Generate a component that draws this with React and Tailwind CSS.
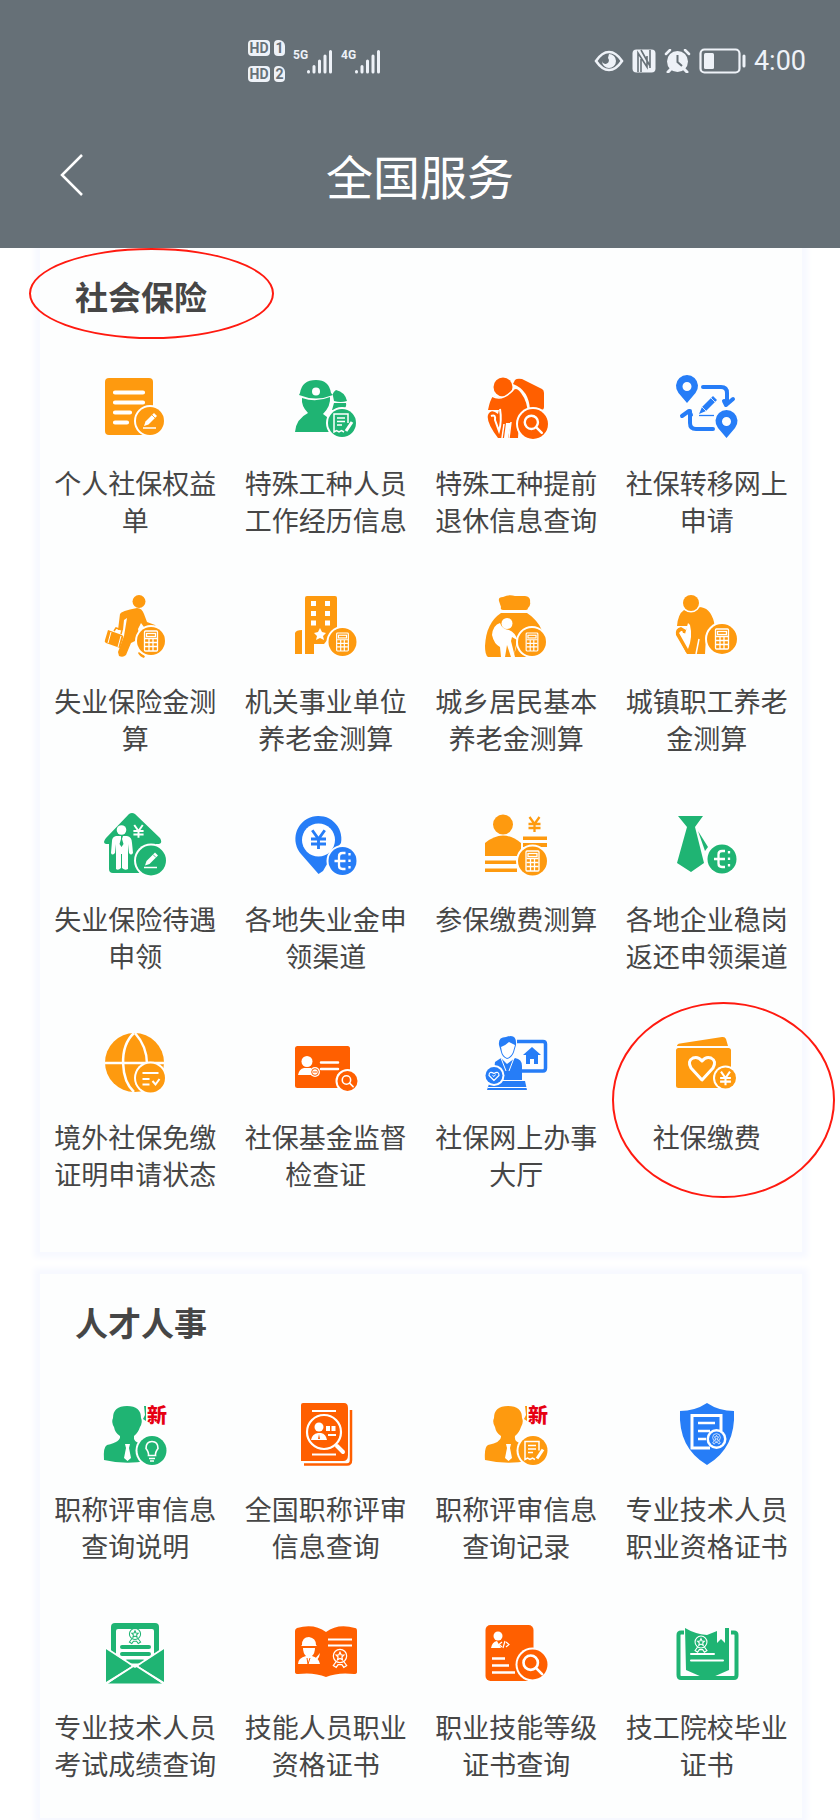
import React from 'react';

/* ---------- small parts shared by the service icons ---------- */

const Badge = ({ x, y, r = 14, children }) => (
  <g transform={`translate(${x} ${y})`}>
    <circle r={r + 2} fill="#fff" />
    <circle r={r} fill="currentColor" />
    {children}
  </g>
);

const Pencil = () => (
  <g>
    <path d="M-6 5 L-4.5 0.5 L4 -8 L7 -5 L-1.5 3.5 Z" fill="#fff" />
    <path d="M2 -6 L5 -3" stroke="currentColor" strokeWidth="0.8" />
    <path d="M-7 7 H6" stroke="#fff" strokeWidth="1.5" />
  </g>
);

const Calculator = () => (
  <g fill="none" stroke="#fff" strokeWidth="1.3">
    <rect x="-6.5" y="-10" width="13" height="20" rx="1" />
    <rect x="-4.5" y="-7.5" width="9" height="3" />
    <path d="M-6 -2.5 H6 M-6 1.5 H6 M-6 5.5 H6 M-2 -2.5 V10 M2 -2.5 V10" />
  </g>
);

const Receipt = () => (
  <g fill="none" stroke="#fff" strokeWidth="1.5">
    <path d="M6 0 V-9 H-8 V9 L-5.5 7.5 L-3 9 L-0.5 7.5 L2 9" />
    <path d="M-5 -5 H3 M-5 -1.5 H3 M-5 2 H0" />
    <path d="M4 8 L10 -1" strokeWidth="3" />
  </g>
);

const Search = ({ s = 1 }) => (
  <g fill="none" stroke="#fff" strokeWidth="2.2" transform={`scale(${s})`}>
    <circle cx="-1.5" cy="-1.5" r="6" />
    <path d="M3 3 L8 8" strokeLinecap="round" />
  </g>
);

const Yen = ({ x = 0, y = 0, s = 1, color = '#fff' }) => (
  <path
    d="M-5 -7 L0 0 L5 -7 M0 0 V8 M-6 0 H6 M-6 4 H6"
    transform={`translate(${x} ${y}) scale(${s})`}
    fill="none"
    stroke={color}
    strokeWidth="2.3"
  />
);

const Channel = () => (
  <g fill="none" stroke="#fff" strokeWidth="2.3">
    <path d="M3 -8 H0 Q-3.500 -8 -3.500 -4.500 V4.500 Q-3.500 8 0 8 H3 M-8 0 H3" />
    <path d="M7 -8 V-5.500 M7 -1.500 V1 M7 5 V7.500" />
  </g>
);

const Medal = ({ x, y, s = 1, color = '#fff' }) => (
  <g transform={`translate(${x} ${y}) scale(${s})`} fill="none" stroke={color} strokeWidth="1.3">
    <circle r="7" />
    <path d="M0 -4 L1.2 -1.200 L4 -1 L2 1 L2.6 4 L0 2.500 L-2.600 4 L-2 1 L-4 -1 L-1.200 -1.200 Z" />
    <path d="M-4 6 L-7 10 L-4 12 L-2 9 H2 L4 12 L7 10 L4 6" />
  </g>
);

/* ---------- service icons, 64 x 64 ---------- */

const icons = {
  statement: (
    <>
      <rect x="2" y="2" width="48" height="57" rx="4" fill="currentColor" />
      <path d="M12 16.500 H40 M12 26.500 H40 M12 36.500 H27 M12 46.500 H24" stroke="#fff" strokeWidth="4.200" strokeLinecap="round" />
      <Badge x={47} y={45}><Pencil /></Badge>
    </>
  ),
  workers: (
    <>
      <g fill="currentColor">
        <path d="M6 17 Q8 4 22 4 Q35 4 37 17 L39 19 Q22 26 5 19 Z" />
        <path d="M8 22 Q22 27 36 21 Q37 30 29 38 Q38 43 39 56 H1 Q2 43 14 37 Q7 30 8 22 Z" />
        <path d="M39 20 Q38 17 42 14 Q51 16 53 25 Q47 27 40 25 Z" />
        <path d="M40 27 H52 Q53 31 49 34 H38 Z" />
      </g>
      <circle cx="22" cy="15.500" r="4" fill="#fff" />
      <Badge x={48} y={47}><Receipt /></Badge>
    </>
  ),
  retire: (
    <>
      <g fill="currentColor">
        <path d="M31 4 Q33 2 38 3 L58 13 Q60 14 60 17 V31 Q60 34 57 34 H46 Q45 14 29 8 Z" />
        <circle cx="19" cy="11" r="9.500" />
        <path d="M9 20 Q18 25 29 15 Q32 10 37 17 Q44 26 44 40 L35 45 L34 62 H24 L27 47 H22 L20 62 H14 Q2 46 4 39 Q7 32 14 38 L15 34 H4 Q6 24 9 20 Z" />
      </g>
      <path d="M8 20 Q18 26 29 14" stroke="#fff" strokeWidth="1.500" fill="none" />
      <path d="M7 40 Q12 38 11 44 L15 55 Q18 45 16 33" stroke="#fff" strokeWidth="2" fill="none" />
      <path d="M27 46 L25 62 M20 48 L18 62" stroke="#fff" strokeWidth="1.500" />
      <Badge x={49} y={48} r={15}><Search s={1.100} /></Badge>
    </>
  ),
  transfer: (
    <>
      <g fill="currentColor">
        <path fillRule="evenodd" d="M12 27 L3.500 17 A11 11 0 1 1 20.500 17 Z M12 6 A4.500 4.500 0 1 0 12 15 A4.500 4.500 0 1 0 12 6 Z" />
        <path fillRule="evenodd" d="M51.500 62 L43 52 A11 11 0 1 1 60 52 Z M51.500 41 A4.500 4.500 0 1 0 51.500 50 A4.500 4.500 0 1 0 51.500 41 Z" />
        <path d="M24 38 L27 31 L36 22 L38 20 L42 24 L31 35 Z" />
      </g>
      <path d="M36 22 L40 26 M27 31 L31 35" stroke="#fff" strokeWidth="0.800" />
      <path d="M24 39.500 H39" stroke="currentColor" strokeWidth="1.300" />
      <g fill="none" stroke="currentColor" strokeWidth="4" strokeLinecap="round" strokeLinejoin="round">
        <path d="M28 11 H46 Q52 11 52 17 V28 M49 25 L51 29 L58 23" />
        <path d="M38 53 H21 Q15 53 15 47 V35 M7 40 L14 35 L16 39" />
      </g>
    </>
  ),
  jobless: (
    <>
      <g fill="currentColor">
        <circle cx="36" cy="7.500" r="6.500" />
        <path d="M34 14 Q39 14 41 20 L44 28 L52 31 Q54 34 51 35 L41 33 L38 29 L35 35 Q37 42 34 46 L28 49 L23 61 Q20 64 16 62 L15 58 L21 42 L24 24 L21 26 L20 36 H15 L17 20 Q18 17 34 14 Z" />
        <path d="M5 36 L19 41 Q21 42 20 44 L17 54 L3 49 Q1 48 2 46 Z" />
        <path d="M36 58 L42 62 L41 64 Q37 63 35 59 Z" />
      </g>
      <path d="M11 37 L13 34 L19 36 L18 40" fill="none" stroke="currentColor" strokeWidth="1.500" />
      <path d="M8 38 L5 49 M18 42 L15 53" stroke="#fff" strokeWidth="1" />
      <Badge x={48} y={47}><Calculator /></Badge>
    </>
  ),
  building: (
    <>
      <path d="M13 2 H41 Q43 2 43 4 V34 L30 50 H20 V60 H11 V4 Q11 2 13 2 Z" fill="currentColor" />
      <path d="M1 39 Q2 36 8 36 V60 H1 Z" fill="currentColor" />
      <path d="M17 7 h5 v5 h-5 Z M31 7 h5 v5 h-5 Z M17 17 h5 v5 h-5 Z M31 17 h5 v5 h-5 Z M17 26.500 h5 v5 h-5 Z M31 26.500 h5 v5 h-5 Z" fill="#fff" />
      <path d="M26 34 L28 38 L32 39 L29 42 L30 46 L26 44 L22 46 L23 42 L20 39 L24 38 Z" fill="#fff" />
      <Badge x={48.500} y={48}><g transform="scale(0.900)"><Calculator /></g></Badge>
    </>
  ),
  moneybag: (
    <>
      <path d="M15 7 Q14 3 19 3 Q25 0 31 2 Q38 2 41 2 Q47 3 46 8 Q47 11 44 14 Q44 16 42 16 H19 Q16 16 17 13 Z" fill="currentColor" />
      <path d="M17 19 H43 Q58 29 60 45 L53 63 H4 Q1 61 1 52 Q2 29 17 19 Z" fill="currentColor" />
      <g fill="#fff">
        <circle cx="23" cy="29.500" r="5.500" />
        <path d="M16 29 Q9 31 8 41 Q10 50 16 53 L17 63 H21 L23 51 L27 63 H31 L27 47 L28 43 L33 46 L30 61 L34 47 Q31 38 25 36 Q18 35 16 29 Z" />
      </g>
      <Badge x={48} y={48}><g transform="scale(0.900)"><Calculator /></g></Badge>
    </>
  ),
  elder: (
    <>
      <path d="M22 13 Q35 12 39 28 L40 36 L31 42 L30 60 H12 L1 41 Q0 34 6 33 L11 36 L13 32 H2 Q3 20 9 16 Q18 21 22 13 Z" fill="currentColor" />
      <circle cx="16" cy="9" r="9.500" fill="#fff" />
      <circle cx="16" cy="9" r="8" fill="currentColor" />
      <path d="M4 39 Q8 34 10 40 L13 29 L15 31 Q18 43 13 55 Z" fill="#fff" />
      <path d="M3 41 Q1 35 6 35 Q9 36 9 39 M3 40 L12 58" stroke="currentColor" strokeWidth="2" fill="none" />
      <path d="M24 45 L21 60" stroke="#fff" strokeWidth="1.500" />
      <Badge x={47} y={45} r={15}><Calculator /></Badge>
    </>
  ),
  housePerson: (
    <>
      <path d="M26 2 Q29 0 32 2 L57 26 Q60 31 56 32 H53 V61 H10 Q6 61 6 57 V32 H3 Q-1 31 3 26 Z" fill="currentColor" />
      <g fill="#fff">
        <circle cx="18.500" cy="18" r="4.800" />
        <path d="M13 24 H24 Q29 25 29 31 L30 41 Q28 44 26 41 L25 32 V57 Q22 59 19 56 V42 H18 V56 Q15 59 13 57 V32 L12 41 Q9 44 8 41 L9 29 Q9 25 13 24 Z" />
      </g>
      <path d="M18 24 h2 l-1 3 l1.500 5 l-2 3 l-2 -3 l1.500 -5 Z" fill="currentColor" />
      <Yen x={35.500} y={19} s={0.850} />
      <Badge x={48} y={48.500} r={15}><Pencil /></Badge>
    </>
  ),
  pinYen: (
    <>
      <path d="M24.500 62 L7 42 A23 23 0 1 1 47 31 L40 40 L29 59 Z" fill="currentColor" />
      <circle cx="24.500" cy="28" r="16.500" fill="#fff" />
      <Yen x={24.500} y={27} s={1.250} color="currentColor" />
      <Badge x={48.500} y={49}><Channel /></Badge>
    </>
  ),
  payCalc: (
    <>
      <g fill="currentColor">
        <circle cx="19" cy="12.500" r="10" />
        <path d="M1 31 Q19 16 37 31 V44 H1 Z" />
        <path d="M1 48.500 H33 V52 H1 Z M1 56.500 H33 V60 H1 Z M39 24.500 H63 V28 H39 Z M39 31 H63 V35 H39 Z" />
      </g>
      <Yen x={50.500} y={12} color="currentColor" />
      <Badge x={48.500} y={49} r={14.500}><Calculator /></Badge>
    </>
  ),
  tie: (
    <>
      <g fill="currentColor">
        <path d="M3 4 H28 L20 15 L29 51 L16 60 L2 51 L12 15 Z" />
        <path d="M23 19 L33 35 L30 39 Z" />
      </g>
      <Badge x={47} y={47} r={14.500}><Channel /></Badge>
    </>
  ),
  globe: (
    <>
      <circle cx="31.500" cy="32.500" r="29.500" fill="currentColor" />
      <path d="M2 33 H61 M31 3 C15 18 18 50 31 62 M32 3 C40 12 44 22 44 34" stroke="#fff" strokeWidth="2.500" fill="none" />
      <Badge x={47.500} y={48} r={14.500}>
        <path d="M-8 -5 H8 M-8 1 H-1 M-8 6.500 H-1" stroke="#fff" strokeWidth="2.200" />
        <path d="M2 3 L5 6.500 L9 1" stroke="#fff" strokeWidth="2" fill="none" />
      </Badge>
    </>
  ),
  idCard: (
    <>
      <rect x="1" y="16" width="55" height="42" rx="2.500" fill="currentColor" />
      <circle cx="13" cy="31.500" r="5.500" fill="#fff" />
      <path d="M4 45 Q5 39 10 38 H17 L20 45 Z" fill="#fff" />
      <circle cx="21" cy="42" r="5" fill="#fff" />
      <circle cx="21" cy="42" r="3.300" fill="none" stroke="currentColor" />
      <path d="M19 42 H23" stroke="currentColor" />
      <path d="M27 32.500 H44 M27 39 H44" stroke="#fff" strokeWidth="2.500" strokeLinecap="round" />
      <Badge x={53.500} y={51} r={10}><Search s={0.700} /></Badge>
    </>
  ),
  hall: (
    <>
      <path d="M33 11.500 H59 Q61.500 11.500 61.500 14 V38 Q61.500 41 59 41 H37" fill="none" stroke="currentColor" strokeWidth="3.500" />
      <path d="M48 17 L57 25 H54 V34 H50 V29 H46 V34 H42 V25 H39 Z" fill="currentColor" />
      <path d="M15 15 Q14 7 22 7 Q33 3 32 15 L30 22 Q28 28 23 29 Q18 27 17 22 Z" fill="currentColor" />
      <path d="M17 17 Q22 15 25 12 L31 15 L29 22 Q27 27 23 28 Q19 26 18 22 Z" fill="#fff" />
      <path d="M17 28 L23 34 L31 28 Q38 29 38 36 V50 H9 L11 32 Z" fill="currentColor" />
      <path d="M17 28 L22 41 M30 28 L25 41" stroke="#fff" strokeWidth="1" />
      <path d="M6 51 H41 L43 60 H3 Z" fill="currentColor" />
      <path d="M4 57.500 H43" stroke="#fff" strokeWidth="1" />
      <Badge x={10} y={45.500} r={8.500}>
        <path d="M0 5 L-5 0 Q-5 -5 0 -2 Q5 -5 5 0 Z" fill="none" stroke="#fff" strokeWidth="1.200" />
        <path d="M-1.500 0 L0 1 L1.500 -1" fill="none" stroke="#fff" strokeWidth="1" />
      </Badge>
    </>
  ),
  wallet: (
    <>
      <path d="M2 16 Q2 14 5 13.500 L47 7 Q50 6.500 51 9 L53 16 Z" fill="currentColor" />
      <rect x="1" y="18" width="55" height="40" rx="2.500" fill="currentColor" />
      <path d="M27 50 L16 38 Q12 31 18 28 Q23 26 27 31 Q31 26 36 28 Q42 31 38 38 Z" fill="none" stroke="#fff" strokeWidth="3" strokeLinejoin="round" />
      <Badge x={50.500} y={48} r={10.500}><Yen s={0.900} /></Badge>
    </>
  ),
  personHelp: (
    <>
      <Person />
      <Badge x={49} y={48.500} r={14.500}>
        <path d="M-3.500 5 Q-3 2 -6 -2 Q-6 -9 0 -9 Q6 -9 6 -2 Q3 2 3.500 5 Z M-3 8 H3 M-2 10.500 H2" fill="none" stroke="#fff" strokeWidth="1.600" />
      </Badge>
    </>
  ),
  bookSearch: (
    <>
      <path d="M10 62.500 H53 Q57 62.500 57 58 V8" fill="none" stroke="currentColor" strokeWidth="2.500" />
      <path d="M9 1 H50 Q54 1 54 6 V53 Q54 59 49 59 H7 V3 Q7 1 9 1 Z" fill="currentColor" />
      <path d="M18 9 H42 M18 52.500 H42" stroke="#fff" strokeWidth="2" />
      <circle cx="30" cy="30" r="17" fill="none" stroke="#fff" strokeWidth="2.200" />
      <path d="M43 44 L49 50" stroke="#fff" strokeWidth="4" strokeLinecap="round" />
      <circle cx="25" cy="25" r="4.500" fill="#fff" />
      <path d="M17 38 Q18 32 24 31 H27 Q32 32 33 38 Z" fill="#fff" />
      <path d="M25 32 L24 37 H26 Z" fill="currentColor" />
      <path d="M32 24 h4 v5 h-4 Z M37.500 24 h4 v5 h-4 Z M34 32 h8 v2 h-8 Z" fill="#fff" />
    </>
  ),
  personRecord: (
    <>
      <Person />
      <Badge x={49} y={48.500} r={14.500}><Receipt /></Badge>
    </>
  ),
  shield: (
    <>
      <path d="M32 1 Q44 9 59 9 Q61 46 32 63 Q3 46 5 9 Q20 9 32 1 Z" fill="currentColor" />
      <path d="M46 29 V13.500 H17 V46 H35" fill="none" stroke="#fff" strokeWidth="3" />
      <path d="M23 21 H40 M23 29 H35 M23 37 H31" stroke="#fff" strokeWidth="2.500" />
      <circle cx="41.500" cy="37" r="10" fill="#fff" />
      <circle cx="41.500" cy="37" r="7.500" fill="currentColor" />
      <Medal x={41.500} y={35.500} s={0.550} />
    </>
  ),
  envelope: (
    <>
      <path d="M8 34 V7 Q8 3 12 3 H52 Q56 3 56 7 V34 L32 50 Z" fill="currentColor" />
      <path d="M13 38 V11 Q13 9 15 9 H49 Q51 9 51 11 V38 L32 50 Z" fill="#fff" />
      <Medal x={32} y={14} s={0.800} color="currentColor" />
      <path d="M19 27 H46 M19 34 H46 M24 41.500 H40" stroke="currentColor" strokeWidth="4" strokeLinecap="round" />
      <path d="M3 28 L29 46 L3 62 Z M61 28 L35 46 L61 62 Z M5 63.500 L32 45 L59 63.500 Z" fill="currentColor" />
      <path d="M3 28 L32 47 L61 28 M4 63 L32 45 L60 63" fill="none" stroke="#fff" strokeWidth="1.800" />
    </>
  ),
  skillBook: (
    <>
      <path d="M3 8 Q20 3 32 12 Q44 3 61 8 Q63 8 63 11 V52 Q63 54 60 54 Q44 52 32 57 Q20 52 4 54 Q1 54 1 52 V11 Q1 9 3 8 Z" fill="currentColor" />
      <g fill="#fff">
        <path d="M8 25 Q8 17 15 17 Q22 18 22 25 L23 26 H7 Z" />
        <path d="M9 28 H21 Q21 33 18 36 Q25 38 26 44 H4 Q4 38 12 36 Q9 33 9 28 Z" />
        <path d="M20 40 L26 33 L25 37 L21 43 Z" />
      </g>
      <path d="M13 38 L14 44 L16 38" fill="none" stroke="currentColor" />
      <path d="M34 19.500 H58 M34 25.500 H58" stroke="#fff" strokeWidth="1.800" />
      <Medal x={46} y={36} s={0.950} />
    </>
  ),
  levelSearch: (
    <>
      <rect x="1.500" y="5" width="48" height="56" rx="5" fill="currentColor" />
      <circle cx="14" cy="16" r="4.500" fill="#fff" />
      <path d="M7 28 Q8 22 13 21 L17 28 Z" fill="#fff" />
      <path d="M18 22 L15 24.500 L18 27 M22 22 L25 24.500 L22 27 M21 21 L19 28" fill="none" stroke="#fff" strokeWidth="1.200" />
      <path d="M8 38.500 H21 M8 45.500 H25 M8 52.500 H31" stroke="#fff" strokeWidth="2.500" />
      <Badge x={48.500} y={44.500} r={15}><Search s={1.200} /></Badge>
    </>
  ),
  graduate: (
    <>
      <path d="M9 12.500 H6 Q3.500 12.500 3.500 15 V55 Q3.500 58 6 58 H59 Q61.500 58 61.500 55 V15 Q61.500 12.500 59 12.500 H56" fill="none" stroke="currentColor" strokeWidth="4" />
      <path d="M10 8 Q20 14 32 15 L42 11 V23 L46 19 L50 23 V8 H54 V50 L38 57 H27 L11 50 Z" fill="currentColor" />
      <Medal x={26} y={22} s={0.850} />
      <path d="M16 34 H39 M16 40.500 H48" stroke="#fff" strokeWidth="2" strokeLinecap="round" />
    </>
  ),
};

/* bust with the red "new" mark beside the head */
function Person() {
  return (
    <>
      <path d="M10 16 Q10 4 24 4 Q38 4 38 16 Q40 20 37 25 Q35 31 31 34 Q30 40 37 41 Q44 43 44 59 Q22 63 1 58 Q0 45 4 43 Q18 40 17 34 Q12 31 11 25 Q8 20 10 16 Z" fill="currentColor" />
      <path d="M22 42 H27 L26 46 L28 56 L24.500 59 L21 56 L23 46 Z" fill="#fff" />
      <path d="M41 4 H43 V19 L40 17 L42 13 Z" fill="currentColor" />
      <text x="44" y="21" fontSize="20" fontWeight="900" fill="#e60012">新</text>
    </>
  );
}

const ORANGE = 'text-[#fe9a0f]';
const GREEN = 'text-[#1fb473]';
const RED = 'text-[#ff5f00]';
const BLUE = 'text-[#267df7]';

const sections = [
  {
    title: '社会保险',
    marked: true,
    items: [
      { icon: 'statement', color: ORANGE, label: '个人社保权益单' },
      { icon: 'workers', color: GREEN, label: '特殊工种人员工作经历信息' },
      { icon: 'retire', color: RED, label: '特殊工种提前退休信息查询' },
      { icon: 'transfer', color: BLUE, label: '社保转移网上申请' },
      { icon: 'jobless', color: ORANGE, label: '失业保险金测算' },
      { icon: 'building', color: ORANGE, label: '机关事业单位养老金测算' },
      { icon: 'moneybag', color: ORANGE, label: '城乡居民基本养老金测算' },
      { icon: 'elder', color: ORANGE, label: '城镇职工养老金测算' },
      { icon: 'housePerson', color: GREEN, label: '失业保险待遇申领' },
      { icon: 'pinYen', color: BLUE, label: '各地失业金申领渠道' },
      { icon: 'payCalc', color: ORANGE, label: '参保缴费测算' },
      { icon: 'tie', color: GREEN, label: '各地企业稳岗返还申领渠道' },
      { icon: 'globe', color: ORANGE, label: '境外社保免缴证明申请状态' },
      { icon: 'idCard', color: RED, label: '社保基金监督检查证' },
      { icon: 'hall', color: BLUE, label: '社保网上办事大厅' },
      { icon: 'wallet', color: ORANGE, label: '社保缴费', marked: true },
    ],
  },
  {
    title: '人才人事',
    items: [
      { icon: 'personHelp', color: GREEN, label: '职称评审信息查询说明' },
      { icon: 'bookSearch', color: RED, label: '全国职称评审信息查询' },
      { icon: 'personRecord', color: ORANGE, label: '职称评审信息查询记录' },
      { icon: 'shield', color: BLUE, label: '专业技术人员职业资格证书' },
      { icon: 'envelope', color: GREEN, label: '专业技术人员考试成绩查询' },
      { icon: 'skillBook', color: RED, label: '技能人员职业资格证书' },
      { icon: 'levelSearch', color: RED, label: '职业技能等级证书查询' },
      { icon: 'graduate', color: GREEN, label: '技工院校毕业证书' },
    ],
  },
];

const Signal = ({ name }) => (
  <div className="flex items-start">
    <span className="w-[13px] text-[12px] leading-3 font-bold">{name}</span>
    <svg className="w-[27px] h-[25px]" viewBox="0 0 27 25" stroke="currentColor" strokeWidth="3" strokeLinecap="round">
      <path d="M2.500 22.500 V23 M8 17.500 V23 M13.500 12 V23 M19 7 V23 M24.500 2.500 V23" />
    </svg>
  </div>
);

const Sim = ({ n }) => (
  <div className="flex gap-1 text-[14px] leading-4 font-bold text-[#667077]">
    <span className="w-[22px] h-4 rounded bg-[#eef2f8] text-center">HD</span>
    <span className="w-[11px] h-4 rounded-sm rounded-tr-md bg-[#eef2f8] text-center">{n}</span>
  </div>
);

const StatusBar = () => (
  <div className="flex items-center justify-between h-[122px] pl-[248px] pr-[34px] text-[#eef2f8] font-[Roboto,sans-serif]">
    <div className="flex items-center gap-2">
      <div className="flex flex-col gap-[10px]">
        <Sim n="1" />
        <Sim n="2" />
      </div>
      <div className="flex gap-2">
        <Signal name="5G" />
        <Signal name="4G" />
      </div>
    </div>

    <div className="flex items-center gap-2">
      <svg className="w-[30px] h-[22px]" viewBox="0 0 30 22">
        <path d="M2 11 Q8 2 15 2 Q22 2 28 11 Q22 20 15 20 Q8 20 2 11 Z" fill="none" stroke="currentColor" strokeWidth="2.500" />
        <path d="M15 4 A7 7 0 1 1 8 11 A3.500 3.500 0 1 0 14 8 Z" fill="currentColor" />
      </svg>
      <svg className="w-6 h-6" viewBox="0 0 24 24">
        <rect x="0.500" y="0.500" width="23" height="23" rx="4" fill="currentColor" />
        <path d="M6 23 V4 L15 18 V7 M9 1 L18 17 M9 23 V10 M18 1 V19" fill="none" stroke="#667077" strokeWidth="1.600" />
      </svg>
      <svg className="w-[27px] h-6" viewBox="0 0 27 24" fill="none" stroke="currentColor">
        <circle cx="13.500" cy="12.500" r="10.500" fill="currentColor" stroke="none" />
        <path d="M2 5 L6 1 M25 5 L21 1" strokeWidth="2.500" strokeLinecap="round" />
        <path d="M7 20 L4 23 M20 20 L23 23" strokeWidth="3" strokeLinecap="round" />
        <path d="M13.500 6 V13 L18 17" stroke="#667077" strokeWidth="2" />
      </svg>
      <svg className="w-[47px] h-[26px]" viewBox="0 0 47 26">
        <rect x="1.500" y="1.500" width="39" height="23" rx="4" fill="none" stroke="currentColor" strokeWidth="2.200" />
        <rect x="5" y="5" width="10" height="16" rx="1.500" fill="currentColor" />
        <path d="M45 8 V18" stroke="currentColor" strokeWidth="3" strokeLinecap="round" />
      </svg>
      <span className="text-[27px] leading-8">4:00</span>
    </div>
  </div>
);

const Service = ({ icon, color, label, marked }) => (
  <li className="relative">
    <a href="#" className="flex flex-col items-center gap-6">
      <svg className={`w-16 h-16 overflow-visible ${color}`} viewBox="0 0 64 64" aria-hidden="true">
        {icons[icon]}
      </svg>
      <span className="px-3 text-[27px] leading-[37px] text-center">{label}</span>
    </a>
    {marked && (
      <span className="absolute left-0 -top-7 w-[223px] h-[196px] rounded-[50%] border-2 border-[#ff1a10] pointer-events-none" />
    )}
  </li>
);

const Section = ({ title, items, marked }) => (
  <section className="pt-6 pb-[60px] bg-[#fdfefe] shadow-[0_0_6px_6px_#f7f9ff] last:pb-9">
    <h2 className="relative w-fit ml-[35px] text-[33px] leading-[48px] font-bold">
      {title}
      {marked && (
        <span className="absolute -left-[46px] -top-6 w-[245px] h-[91px] rounded-[50%] border-2 border-[#ff1a10] pointer-events-none" />
      )}
    </h2>
    <ul className="grid grid-cols-4 gap-y-14 mt-14">
      {items.map((item) => (
        <Service key={item.label} {...item} />
      ))}
    </ul>
  </section>
);

export default function App() {
  return (
    <div className="min-h-screen overflow-hidden bg-white text-[#464646] font-['Noto_Sans_CJK_SC',sans-serif]">
      <header className="relative z-10 bg-[#667077] text-white">
        <StatusBar />
        <div className="grid grid-cols-[1fr_auto_1fr] items-center h-[126px] px-[50px] pb-5">
          <button type="button" aria-label="返回" className="flex items-center justify-center w-11 h-14">
            <svg className="w-6 h-[42px]" viewBox="0 0 24 42" fill="none" stroke="currentColor" strokeWidth="2.500">
              <path d="M22 1 L2 21 L22 41" />
            </svg>
          </button>
          <h1 className="text-[47px] leading-[64px]">全国服务</h1>
        </div>
      </header>

      <main className="flex flex-col gap-[22px] pl-10 pr-[38px]">
        {sections.map((section) => (
          <Section key={section.title} {...section} />
        ))}
      </main>
    </div>
  );
}
